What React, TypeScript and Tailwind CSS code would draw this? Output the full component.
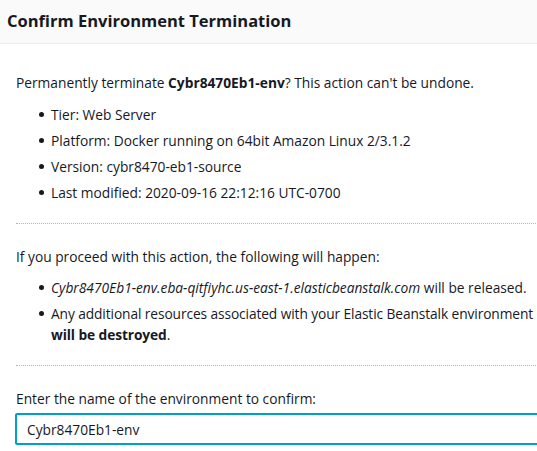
import React from 'react';

const details = [
  'Tier: Web Server',
  'Platform: Docker running on 64bit Amazon Linux 2/3.1.2',
  'Version: cybr8470-eb1-source',
  'Last modified: 2020-09-16 22:12:16 UTC-0700',
];

const Bullet = ({ children, className = '' }: { children: React.ReactNode; className?: string }) => (
  <li className="flex">
    <span className="w-[35px] shrink-0 flex justify-end pr-[7px] pt-[8px]">
      <span className="w-[5px] h-[5px] rounded-full bg-[#16191f]" />
    </span>
    <span className={className}>{children}</span>
  </li>
);

export default function App() {
  return (
    <div className="w-full h-[451px] overflow-hidden bg-white text-[#16191f] font-['Open_Sans',sans-serif] text-[13.75px] leading-[21px]">
      <div className="w-[580px]">
        {/* Header */}
        <div className="h-[44px] bg-[#fafafa] border-b border-[#eaeded] px-[7px] flex items-center">
          <h1 className="text-[16.5px] font-bold leading-[22px] -mt-[1px]">Confirm Environment Termination</h1>
        </div>

        <div className="pl-[16px]">
          <div className="pt-[28px] pb-[20px] border-b border-dotted border-[#aab7b8]">
            <p>
              Permanently terminate <b>Cybr8470Eb1-env</b>? This action can't be undone.
            </p>
            <ul className="mt-[11px] flex flex-col gap-[5px]">
              {details.map((d) => (
                <Bullet key={d}>{d}</Bullet>
              ))}
            </ul>
          </div>

          <div className="pt-[22px] pb-[20px] border-b border-dotted border-[#aab7b8]">
            <p>If you proceed with this action, the following will happen:</p>
            <ul className="mt-[10px] flex flex-col gap-[5px]">
              <Bullet>
                <i>Cybr8470Eb1-env.eba-qitfiyhc.us-east-1.elasticbeanstalk.com</i> will be released.
              </Bullet>
              <Bullet className="tracking-[-0.1px]">
                Any additional resources associated with your Elastic Beanstalk environment
                <br />
                <b>will be destroyed</b>.
              </Bullet>
            </ul>
          </div>

          <div className="pt-[22px]">
            <label className="block">Enter the name of the environment to confirm:</label>
            <input
              readOnly
              value="Cybr8470Eb1-env"
              className="mt-[4px] block w-[560px] h-[32px] -ml-[1px] px-[10px] border-2 border-[#00a1c9] rounded-[2px] text-[13.75px] text-[#16191f] outline-none"
            />
          </div>
        </div>
      </div>
    </div>
  );
}
